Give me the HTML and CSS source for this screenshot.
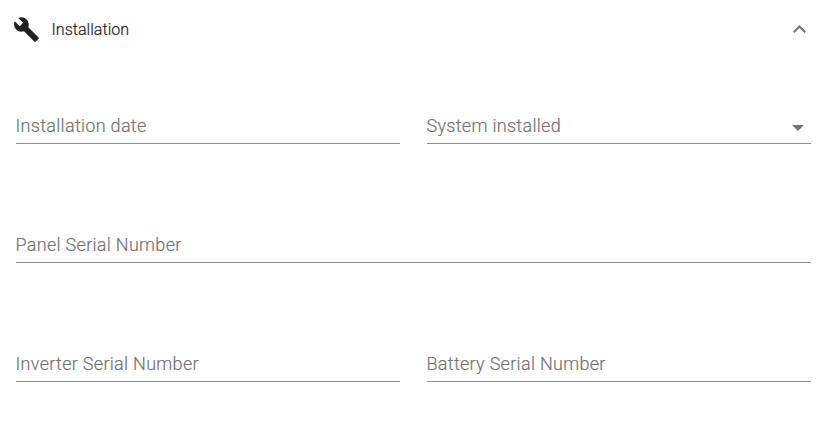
FILE: index.html
```html
<!DOCTYPE html>
<html lang="en">
<head>
<meta charset="utf-8">
<title>Installation</title>
<link rel="stylesheet" href="styles.css">
</head>
<body>
<section class="panel">
  <header class="panel-header">
    <svg class="wrench" viewBox="0 0 24 24"><path d="M22.7 19l-9.1-9.1c.9-2.3.4-5-1.5-6.9-2-2-5-2.4-7.4-1.3L9 6 6 9 1.6 4.7C.4 7.1.9 10.1 2.9 12.1c1.9 1.9 4.6 2.4 6.9 1.5l9.1 9.1c.4.4 1 .4 1.4 0l2.3-2.3c.5-.4.5-1.1.1-1.4z"/></svg>
    <h1 class="title">Installation</h1>
    <svg class="chevron" viewBox="6 8 12 7.41"><path d="M12 8l-6 6 1.41 1.41L12 10.83l4.59 4.58L18 14z"/></svg>
  </header>
  <div class="fields">
    <div class="field"><span class="label">Installation date</span></div>
    <div class="field"><span class="label">System installed</span><span class="arrow"></span></div>
    <div class="field wide"><span class="label">Panel Serial Number</span></div>
    <div class="field"><span class="label">Inverter Serial Number</span></div>
    <div class="field"><span class="label">Battery Serial Number</span></div>
  </div>
</section>
</body>
</html>
```
FILE: styles.css
```css
body {
  margin: 0;
  background: #fff;
  font-family: Roboto, sans-serif;
}
.panel-header {
  display: flex;
  align-items: center;
  height: 59px;
  padding: 0 18px 0 13px;
}
.wrench {
  width: 27px;
  height: 27px;
  fill: #212121;
}
.title {
  flex: 1;
  margin: 0 0 0 11.5px;
  font-size: 16px;
  font-weight: 300;
  line-height: 24px;
  letter-spacing: 0.04px;
  color: #212121;
  -webkit-text-stroke: 0.2px #212121;
}
.chevron {
  width: 13px;
  height: 8px;
  margin-bottom: 1px;
  fill: #757575;
}
.fields {
  display: grid;
  grid-template-columns: 384px 384px;
  grid-auto-rows: 32px;
  gap: 87px 27px;
  padding: 53px 13px 0 16px;
}
.field {
  display: flex;
  justify-content: space-between;
  box-sizing: border-box;
  border-bottom: 1px solid #8f8f8f;
}
.wide {
  grid-column: 1 / -1;
}
.label {
  margin-left: -0.5px;
  font-size: 18px;
  font-weight: 300;
  line-height: 28px;
  letter-spacing: 0.3px;
  color: #757575;
  -webkit-text-stroke: 0.2px #757575;
}
.arrow {
  width: 0;
  height: 0;
  margin: 13px 7.5px 0 0;
  border: 6px solid transparent;
  border-top-color: #757575;
  border-bottom: 0;
}
```
